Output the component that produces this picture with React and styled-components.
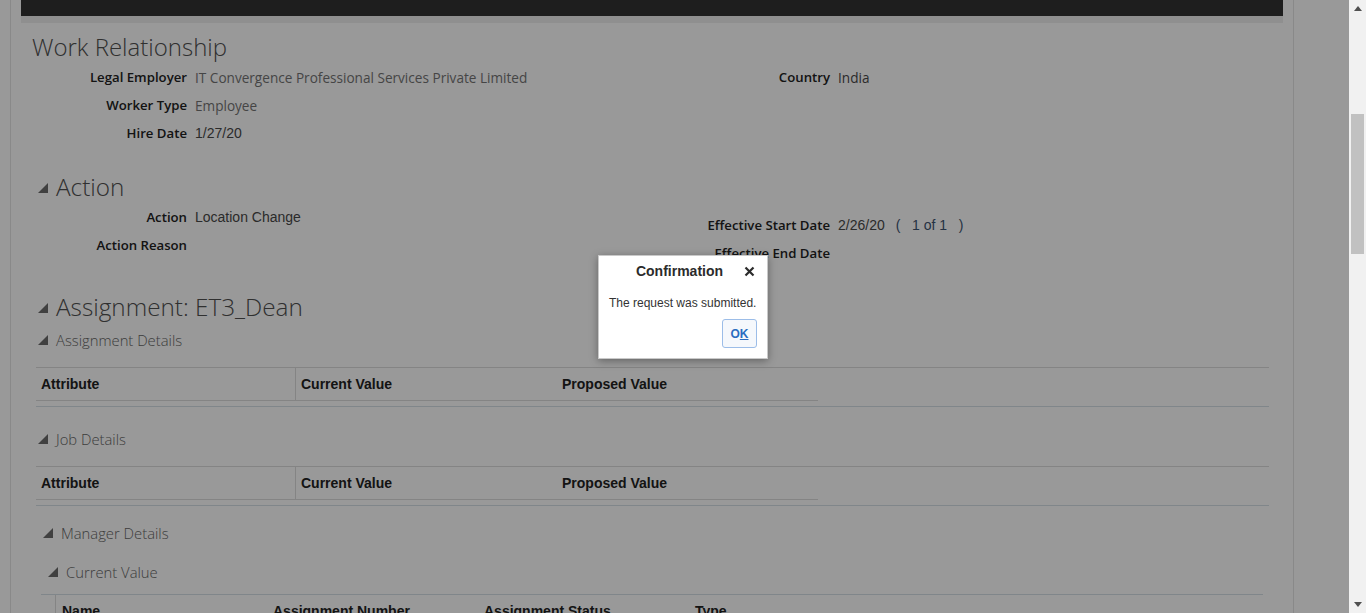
import styled, { createGlobalStyle } from "styled-components";

const GlobalStyle = createGlobalStyle`
  html, body {
    margin: 0;
    padding: 0;
    overflow: hidden;
    background: #ffffff;
  }
  * {
    box-sizing: border-box;
  }
`;

const workFields = {
  left: [
    { label: "Legal Employer", value: "IT Convergence Professional Services Private Limited", tone: "soft" },
    { label: "Worker Type", value: "Employee", tone: "soft" },
    { label: "Hire Date", value: "1/27/20" },
  ],
  right: [{ label: "Country", value: "India", ui: true }],
};

const actionFields = {
  left: [
    { label: "Action", value: "Location Change" },
    { label: "Action Reason", value: "" },
  ],
  right: [
    { label: "Effective Start Date", value: "2/26/20", counter: "1 of 1" },
    { label: "Effective End Date", value: "" },
  ],
};

const compareColumns = ["Attribute", "Current Value", "Proposed Value"];
const managerColumns = ["Name", "Assignment Number", "Assignment Status", "Type"];

const Triangle = () => (
  <svg width="10" height="10" viewBox="0 0 10 10">
    <polygon points="0,10 10,10 10,0" fill="#6c6c6c" />
  </svg>
);

const ArrowUp = () => (
  <svg width="8" height="5" viewBox="0 0 8 5">
    <polygon points="0,5 8,5 4,0" fill="#505050" />
  </svg>
);

const ArrowDown = () => (
  <svg width="8" height="5" viewBox="0 0 8 5">
    <polygon points="0,0 8,0 4,5" fill="#505050" />
  </svg>
);

const CloseIcon = () => (
  <svg width="11" height="11" viewBox="0 0 11 11">
    <path d="M1.5 1.5 L9.5 9.5 M9.5 1.5 L1.5 9.5" stroke="#2b2b2b" strokeWidth="2.2" strokeLinecap="butt" />
  </svg>
);

const SectionHeader = ({ title, size = "large", indent = 0, top = 0 }) => (
  <SectionHead $indent={indent} $top={top}>
    <TriangleBox $size={size}>
      <Triangle />
    </TriangleBox>
    <SectionTitle $size={size}>{title}</SectionTitle>
  </SectionHead>
);

const FieldList = ({ fields, offset = 0 }) => (
  <FormColumn $offset={offset}>
    {fields.map((f) => (
      <FieldRow key={f.label}>
        <Label>{f.label}</Label>
        <Value $tone={f.tone} $ui={f.ui}>
          {f.value}
          {f.counter && (
            <Counter>
              (&nbsp;&nbsp;&nbsp;{f.counter}&nbsp;&nbsp;&nbsp;)
            </Counter>
          )}
        </Value>
      </FieldRow>
    ))}
  </FormColumn>
);

const CompareTable = () => (
  <Table>
    <HeaderRow>
      {compareColumns.map((c, i) => (
        <HeadCell key={c} $width={i === 0 ? 260 : 261} $divider={i === 0}>
          {c}
        </HeadCell>
      ))}
    </HeaderRow>
    <TableFoot />
  </Table>
);

const App = () => {
  return (
    <>
      <GlobalStyle />
      <Page>
        <Main>
          <Panel>
            <TopBar />
            <TopStrip />
            <Content>
              <PageTitle>Work Relationship</PageTitle>
              <FormGrid $top={1}>
                <FieldList fields={workFields.left} />
                <FieldList fields={workFields.right} />
              </FormGrid>

              <SectionHeader title="Action" top={25} />
              <FormGrid $top={1}>
                <FieldList fields={actionFields.left} />
                <FieldList fields={actionFields.right} offset={8} />
              </FormGrid>

              <SectionHeader title="Assignment: ET3_Dean" top={25} />
              <SectionHeader title="Assignment Details" size="small" top={8} />
              <CompareTable />

              <SectionHeader title="Job Details" size="small" top={22} />
              <CompareTable />

              <SectionHeader title="Manager Details" size="small" indent={5} top={17} />
              <SectionHeader title="Current Value" size="small" indent={10} top={19} />
              <ManagerTable>
                <SelectorCol />
                {managerColumns.map((c) => (
                  <ManagerCell key={c}>{c}</ManagerCell>
                ))}
              </ManagerTable>
            </Content>
          </Panel>

          <Overlay />
          <Dialog>
            <DialogHeader>
              <DialogTitle>Confirmation</DialogTitle>
              <CloseButton>
                <CloseIcon />
              </CloseButton>
            </DialogHeader>
            <DialogBody>The request was submitted.</DialogBody>
            <DialogFooter>
              <OkButton>
                O<u>K</u>
              </OkButton>
            </DialogFooter>
          </Dialog>
        </Main>

        <Scrollbar>
          <ScrollArrow>
            <ArrowUp />
          </ScrollArrow>
          <ScrollTrack>
            <ScrollThumb />
          </ScrollTrack>
          <ScrollArrow>
            <ArrowDown />
          </ScrollArrow>
        </Scrollbar>
      </Page>
    </>
  );
};

export default App;

const Page = styled.div`
  display: flex;
  height: 100vh;
  width: 100vw;
  overflow: hidden;
`;

const Main = styled.div`
  flex: 1;
  position: relative;
  overflow: hidden;
  background: #ffffff;
`;

const Panel = styled.div`
  margin-left: 10px;
  width: 1284px;
  min-height: 100vh;
  padding: 0 10px 0 10px;
  border-left: 1px solid #e4e4e4;
  border-right: 1px solid #e4e4e4;
`;

const TopBar = styled.div`
  height: 16px;
  background: #323232;
`;

const TopStrip = styled.div`
  height: 7px;
  background: #eeeeee;
`;

const Content = styled.div`
  padding: 0 14px 0 15px;
`;

const PageTitle = styled.h1`
  margin: 9px 0 0 -4px;
  font-family: "Open Sans", "Noto Sans", sans-serif;
  font-weight: 300;
  font-size: 24px;
  line-height: 30px;
  color: #505050;
`;

const SectionHead = styled.div`
  display: flex;
  align-items: center;
  margin-top: ${(p) => p.$top}px;
  padding-left: ${(p) => p.$indent}px;
`;

const TriangleBox = styled.div`
  width: 20px;
  padding-left: 2px;
  display: flex;
  align-items: center;
  svg {
    display: block;
    margin-top: ${(p) => (p.$size === "large" ? "2px" : "0px")};
  }
`;

const SectionTitle = styled.h2`
  margin: 0;
  font-family: "Open Sans", "Noto Sans", sans-serif;
  font-weight: 300;
  font-size: ${(p) => (p.$size === "large" ? "24.3px" : "14.8px")};
  line-height: ${(p) => (p.$size === "large" ? "30px" : "20px")};
  color: ${(p) => (p.$size === "large" ? "#505050" : "#666666")};
  white-space: nowrap;
`;

const FormGrid = styled.div`
  display: grid;
  grid-template-columns: 643px 1fr;
  margin-top: ${(p) => p.$top}px;
`;

const FormColumn = styled.div`
  padding-top: ${(p) => p.$offset}px;
`;

const FieldRow = styled.div`
  display: grid;
  grid-template-columns: 151px 1fr;
  column-gap: 8px;
  height: 28px;
  align-items: center;
`;

const Label = styled.div`
  text-align: right;
  font-family: "Open Sans", "Noto Sans", sans-serif;
  font-weight: 600;
  font-size: 13.2px;
  color: #222222;
  white-space: nowrap;
`;

const Value = styled.div`
  font-family: ${(p) =>
    p.$tone === "soft" || p.$ui
      ? `"Open Sans", "Noto Sans", sans-serif`
      : `"Liberation Sans", Arial, sans-serif`};
  font-size: ${(p) => (p.$tone === "soft" || p.$ui ? "13.6px" : "14px")};
  color: ${(p) => (p.$tone === "soft" ? "#747474" : "#484848")};
  white-space: nowrap;
`;

const Counter = styled.span`
  margin-left: 11px;
  color: #3d5470;
`;

const Table = styled.div`
  margin-top: 17px;
  border-top: 1px solid #dcdcdc;
`;

const HeaderRow = styled.div`
  display: flex;
`;

const HeadCell = styled.div`
  width: ${(p) => p.$width}px;
  height: 33px;
  padding: 0 5px;
  display: flex;
  align-items: center;
  border-bottom: 1px solid #dcdcdc;
  border-right: ${(p) => (p.$divider ? "1px solid #dcdcdc" : "none")};
  font-family: "Liberation Sans", Arial, sans-serif;
  font-weight: 700;
  font-size: 14px;
  color: #222222;
`;

const TableFoot = styled.div`
  margin-top: 5px;
  border-top: 1px solid #d6dfe6;
`;

const ManagerTable = styled.div`
  margin: 12px 6px 0 5px;
  border-top: 1px solid #d6dfe6;
  display: flex;
  height: 40px;
`;

const SelectorCol = styled.div`
  width: 15px;
  border-right: 1px solid #dcdcdc;
`;

const ManagerCell = styled.div`
  width: 211px;
  padding: 8px 6px 0;
  font-family: "Liberation Sans", Arial, sans-serif;
  font-weight: 700;
  font-size: 14px;
  line-height: 16px;
  color: #222222;
`;

const Overlay = styled.div`
  position: absolute;
  inset: 0;
  background: rgba(0, 0, 0, 0.4);
`;

const Dialog = styled.div`
  position: absolute;
  left: 598px;
  top: 255px;
  width: 170px;
  height: 104px;
  background: #ffffff;
  border: 1px solid #c9c9c9;
  box-shadow: 0 2px 8px rgba(0, 0, 0, 0.35);
  font-family: "Liberation Sans", Arial, sans-serif;
`;

const DialogHeader = styled.div`
  display: flex;
  align-items: center;
  padding: 7px 12px 0 20px;
  height: 23px;
`;

const DialogTitle = styled.div`
  flex: 1;
  text-align: center;
  font-weight: 700;
  font-size: 14px;
  line-height: 16px;
  color: #2b2b2b;
`;

const CloseButton = styled.div`
  display: flex;
  margin-left: 4px;
`;

const DialogBody = styled.div`
  margin-top: 16px;
  padding: 0 10px;
  font-size: 12px;
  line-height: 16px;
  color: #333333;
  white-space: nowrap;
`;

const DialogFooter = styled.div`
  display: flex;
  justify-content: flex-end;
  margin-top: 8px;
  padding-right: 10px;
`;

const OkButton = styled.div`
  width: 35px;
  height: 29px;
  display: flex;
  align-items: center;
  justify-content: center;
  border: 1px solid #9cbde8;
  border-radius: 3px;
  background: #f5f8fc;
  font-weight: 700;
  font-size: 12px;
  color: #2a6cc0;
`;

const Scrollbar = styled.div`
  width: 17px;
  display: flex;
  flex-direction: column;
  background: #f1f1f1;
`;

const ScrollArrow = styled.div`
  height: 17px;
  display: flex;
  align-items: center;
  justify-content: center;
`;

const ScrollTrack = styled.div`
  flex: 1;
  padding: 0 2px;
`;

const ScrollThumb = styled.div`
  margin-top: 97px;
  height: 140px;
  background: #c1c1c1;
`;
